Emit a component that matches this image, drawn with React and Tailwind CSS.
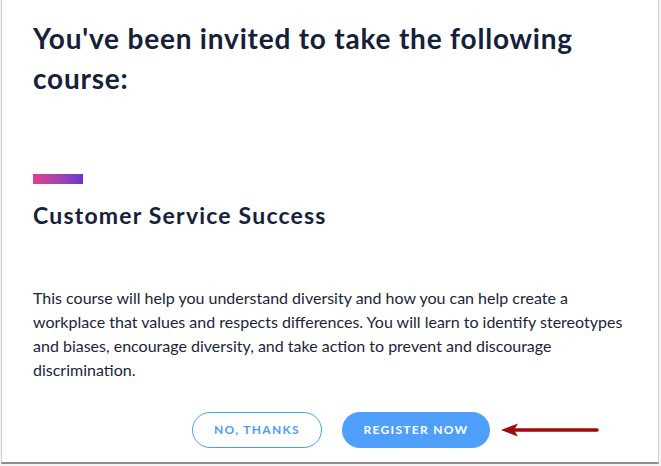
import React from 'react';

const CourseInvite = () => {
  return (
    <div className="w-[661px] h-[466px] bg-[#f4f4f4] overflow-hidden" style={{ fontFamily: 'Lato, "Noto Sans", sans-serif' }}>
      <div className="ml-px w-[658px] h-[464px] bg-white border-l border-r border-[#cfcfcf] border-b-2 border-b-[#8f8f8f] pl-[31px] flex flex-col">
        {/* heading */}
        <h1 className="mt-[18px] w-[560px] text-[28px] leading-[40px] font-bold text-[#15213a] tracking-[0.8px]">
          You've been invited to take the following course:
        </h1>

        {/* course */}
        <div className="mt-[76px] w-[50px] h-[10px] bg-gradient-to-r from-[#e23b8a] to-[#6a33cf]" />
        <h2 className="mt-[16px] text-[23px] leading-[30px] font-bold text-[#15213a] tracking-[1.2px]">
          Customer Service Success
        </h2>

        <p className="mt-[56px] w-[602px] text-[16px] leading-[24px] text-[#1b2538]">
          This course will help you understand diversity and how you can help create a workplace that values and
          respects differences. You will learn to identify stereotypes and biases, encourage diversity, and take
          action to prevent and discourage discrimination.
        </p>

        {/* actions */}
        <div className="mt-[30px] flex items-center pl-[159px]">
          <button className="w-[130px] h-9 rounded-full border border-[#4b9dfd] text-[#4b9dfd] text-[12px] font-bold tracking-[1.3px]">
            NO, THANKS
          </button>
          <button className="ml-5 w-[148px] h-9 rounded-full bg-[#4f9ffd] text-white text-[12px] font-bold tracking-[1.3px]">
            REGISTER NOW
          </button>
          <svg className="ml-[11px]" width="100" height="14" viewBox="0 0 100 14">
            <line x1="12" y1="7" x2="96" y2="7" stroke="#a10a0a" strokeWidth="3.5" strokeLinecap="round" />
            <path d="M0 7 L17 0.5 L13 7 L17 13.5 Z" fill="#a10a0a" />
          </svg>
        </div>
      </div>
    </div>
  );
};

export default function App() {
  return <CourseInvite />;
}
